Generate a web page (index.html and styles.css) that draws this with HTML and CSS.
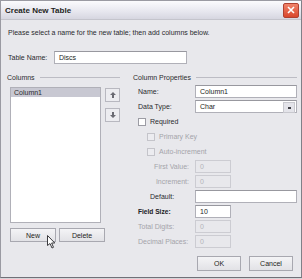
FILE: index.html
```html
<!DOCTYPE html>
<html lang="en">
<head>
    <meta charset="UTF-8">
    <title>Create New Table</title>
    <link rel="stylesheet" href="styles.css">
</head>
<body>
    <div class="dialog">
        <div class="titlebar">
            <span class="title">Create New Table</span>
            <span class="close-btn">
                <svg width="10" height="10" viewBox="0 0 10 10"><path d="M2 2 L8 8 M8 2 L2 8" stroke="#fff" stroke-width="1.6"/></svg>
            </span>
        </div>

        <div class="content">
            <p class="intro">Please select a name for the new table; then add columns below.</p>

            <div class="table-name">
                <span class="lbl">Table Name:</span>
                <span class="field name-field">Discs</span>
            </div>

            <div class="groups">
                <!-- Columns group -->
                <div class="group columns-group">
                    <div class="group-head"><span>Columns</span><i class="rule"></i></div>
                    <div class="list-row">
                        <div class="listbox">
                            <div class="list-item selected">Column1</div>
                        </div>
                        <div class="arrows">
                            <span class="arrow-btn"><svg width="6" height="6" viewBox="0 0 6 6"><path d="M3 0 L6 3 L4 3 L4 6 L2 6 L2 3 L0 3 Z" fill="#6a6a72"/></svg></span>
                            <span class="arrow-btn"><svg width="6" height="6" viewBox="0 0 6 6"><path d="M3 6 L6 3 L4 3 L4 0 L2 0 L2 3 L0 3 Z" fill="#6a6a72"/></svg></span>
                        </div>
                    </div>
                    <div class="list-buttons">
                        <span class="btn">New</span>
                        <span class="btn">Delete</span>
                    </div>
                </div>

                <!-- Column Properties group -->
                <div class="group props-group">
                    <div class="group-head"><span>Column Properties</span><i class="rule"></i></div>
                    <div class="prop">
                        <span class="plabel">Name:</span>
                        <span class="field wide">Column1</span>
                    </div>
                    <div class="prop">
                        <span class="plabel">Data Type:</span>
                        <span class="field wide select">Char<span class="drop"><i></i></span></span>
                    </div>
                    <div class="prop check-row">
                        <span class="box"></span><span>Required</span>
                    </div>
                    <div class="prop check-row sub disabled">
                        <span class="box"></span><span>Primary Key</span>
                    </div>
                    <div class="prop check-row sub disabled">
                        <span class="box"></span><span>Auto-increment</span>
                    </div>
                    <div class="prop disabled">
                        <span class="plabel right">First Value:</span>
                        <span class="field short off">0</span>
                    </div>
                    <div class="prop disabled">
                        <span class="plabel right">Increment:</span>
                        <span class="field short off">0</span>
                    </div>
                    <div class="prop">
                        <span class="plabel default-lbl">Default:</span>
                        <span class="field wide"></span>
                    </div>
                    <div class="prop">
                        <span class="plabel strong">Field Size:</span>
                        <span class="field short">10</span>
                    </div>
                    <div class="prop disabled">
                        <span class="plabel">Total Digits:</span>
                        <span class="field short off">0</span>
                    </div>
                    <div class="prop disabled">
                        <span class="plabel">Decimal Places:</span>
                        <span class="field short off">0</span>
                    </div>
                </div>
            </div>

            <div class="footer">
                <span class="btn ok">OK</span>
                <span class="btn cancel">Cancel</span>
            </div>
        </div>

        <svg class="cursor" width="9" height="14" viewBox="0 0 9 14">
            <path d="M0.5 0.5 L0.5 10.5 L3 8.5 L5 13 L6.5 12.3 L4.6 8 L7.8 8 Z" fill="#fff" stroke="#3a3a3e" stroke-width="1"/>
        </svg>
    </div>
</body>
</html>
```

FILE: styles.css
```css
/* --- Base --- */
body {
    margin: 0;
    background: #d4d4d8;
    font-family: 'Liberation Sans', Arial, sans-serif;
    font-size: 7px;
    color: #2a2a2e;
}

.dialog {
    position: relative;
    width: 300px;
    height: 276px;
    background: #e8e8ec;
    border: 1px solid #9a9aa2;
    border-bottom-color: #707078;
    border-right-color: #808088;
    overflow: hidden;
}

/* --- Title bar --- */
.titlebar {
    height: 18px;
    display: flex;
    align-items: center;
    justify-content: space-between;
    padding: 0 2px 0 4px;
    background: linear-gradient(#fbfbfd, #e6e6ee 60%, #d6d6e0);
    border-bottom: 1px solid #c4c4cc;
}
.title {
    font-weight: 700;
    font-size: 8px;
    color: #1e1e22;
}
.close-btn {
    width: 14px;
    height: 13px;
    display: flex;
    align-items: center;
    justify-content: center;
    background: linear-gradient(#f0836a, #d9462c);
    border: 1px solid #b04030;
    border-radius: 2px;
}

/* --- Content --- */
.content { padding: 6px 5px 0 6px; }
.intro { margin: 3px 0 0 1px; }

.table-name {
    display: flex;
    align-items: center;
    margin-top: 15px;
    padding-left: 1px;
}
.table-name .lbl { width: 46px; }
.name-field { width: 123px; }

.field {
    display: block;
    flex-shrink: 0;
    height: 11px;
    line-height: 11px;
    padding: 0 4px;
    background: #fff;
    border: 1px solid #b0b0b8;
    border-top-color: #98989f;
    color: #1e1e22;
    box-sizing: content-box;
}
.field.wide { width: 92px; }
.field.short { width: 26px; }
.field.off {
    background: #e8e8ec;
    border-color: #ccccd2;
    color: #b4b4ba;
}
.select { position: relative; }
.drop {
    position: absolute;
    right: 1px;
    top: 1px;
    width: 10px;
    height: 9px;
    background: #e4e4ea;
    border: 1px solid #c8c8ce;
    display: flex;
    align-items: center;
    justify-content: center;
}
.drop i {
    width: 3px;
    height: 2px;
    background: #404046;
}

/* --- Groups --- */
.groups {
    display: grid;
    grid-template-columns: 113px 1fr;
    gap: 12px;
    margin-top: 10px;
}
.group-head {
    display: flex;
    align-items: center;
    gap: 5px;
}
.rule {
    flex: 1;
    height: 1px;
    background: #bcbcc4;
}

.list-row {
    display: flex;
    gap: 4px;
    margin: 6px 0 0 3px;
}
.listbox {
    width: 91px;
    height: 134px;
    background: #fff;
    border: 1px solid #b0b0b8;
}
.list-item {
    padding: 0 3px;
    height: 9px;
    line-height: 9px;
}
.list-item.selected { background: #c8c8d2; }
.arrows {
    display: flex;
    flex-direction: column;
    gap: 6px;
    margin-top: 1px;
}
.arrow-btn {
    width: 13px;
    height: 12px;
    display: flex;
    align-items: center;
    justify-content: center;
    background: #ececf0;
    border: 1px solid #b8b8c0;
}

.list-buttons {
    display: flex;
    gap: 3px;
    margin: 5px 0 0 3px;
}
.btn {
    display: flex;
    align-items: center;
    justify-content: center;
    width: 44px;
    height: 12px;
    background: linear-gradient(#f4f4f6, #e2e2e6);
    border: 1px solid #a8a8b0;
    color: #1e1e22;
}

/* --- Properties --- */
.props-group .group-head { margin-left: 1px; }
.prop {
    display: flex;
    align-items: center;
    height: 15px;
    padding-left: 6px;
}
.props-group .group-head + .prop { margin-top: 3px; }
.plabel { width: 57px; flex-shrink: 0; }
.plabel.right {
    text-align: right;
    padding-right: 6px;
    width: 51px;
}
.plabel.default-lbl {
    padding-left: 12px;
    width: 45px;
}
.plabel.strong { font-weight: 700; color: #202024; font-size: 6.6px; padding-left: 0; }
.disabled { color: #a4a4aa; }

.check-row { gap: 4px; }
.check-row .box {
    width: 8px;
    height: 8px;
    background: #fff;
    border: 1px solid #9c9ca4;
    box-sizing: border-box;
}
.check-row.sub { padding-left: 15px; }
.check-row.disabled .box {
    background: #ececf0;
    border-color: #c4c4ca;
}

/* --- Footer --- */
.footer {
    display: flex;
    justify-content: flex-end;
    gap: 8px;
    margin-top: 7px;
    padding-right: 3px;
}
.footer .btn { width: 42px; height: 13px; }

/* cursor sits over the New button */
.cursor {
    position: absolute;
    left: 46px;
    top: 234px;
}
```
